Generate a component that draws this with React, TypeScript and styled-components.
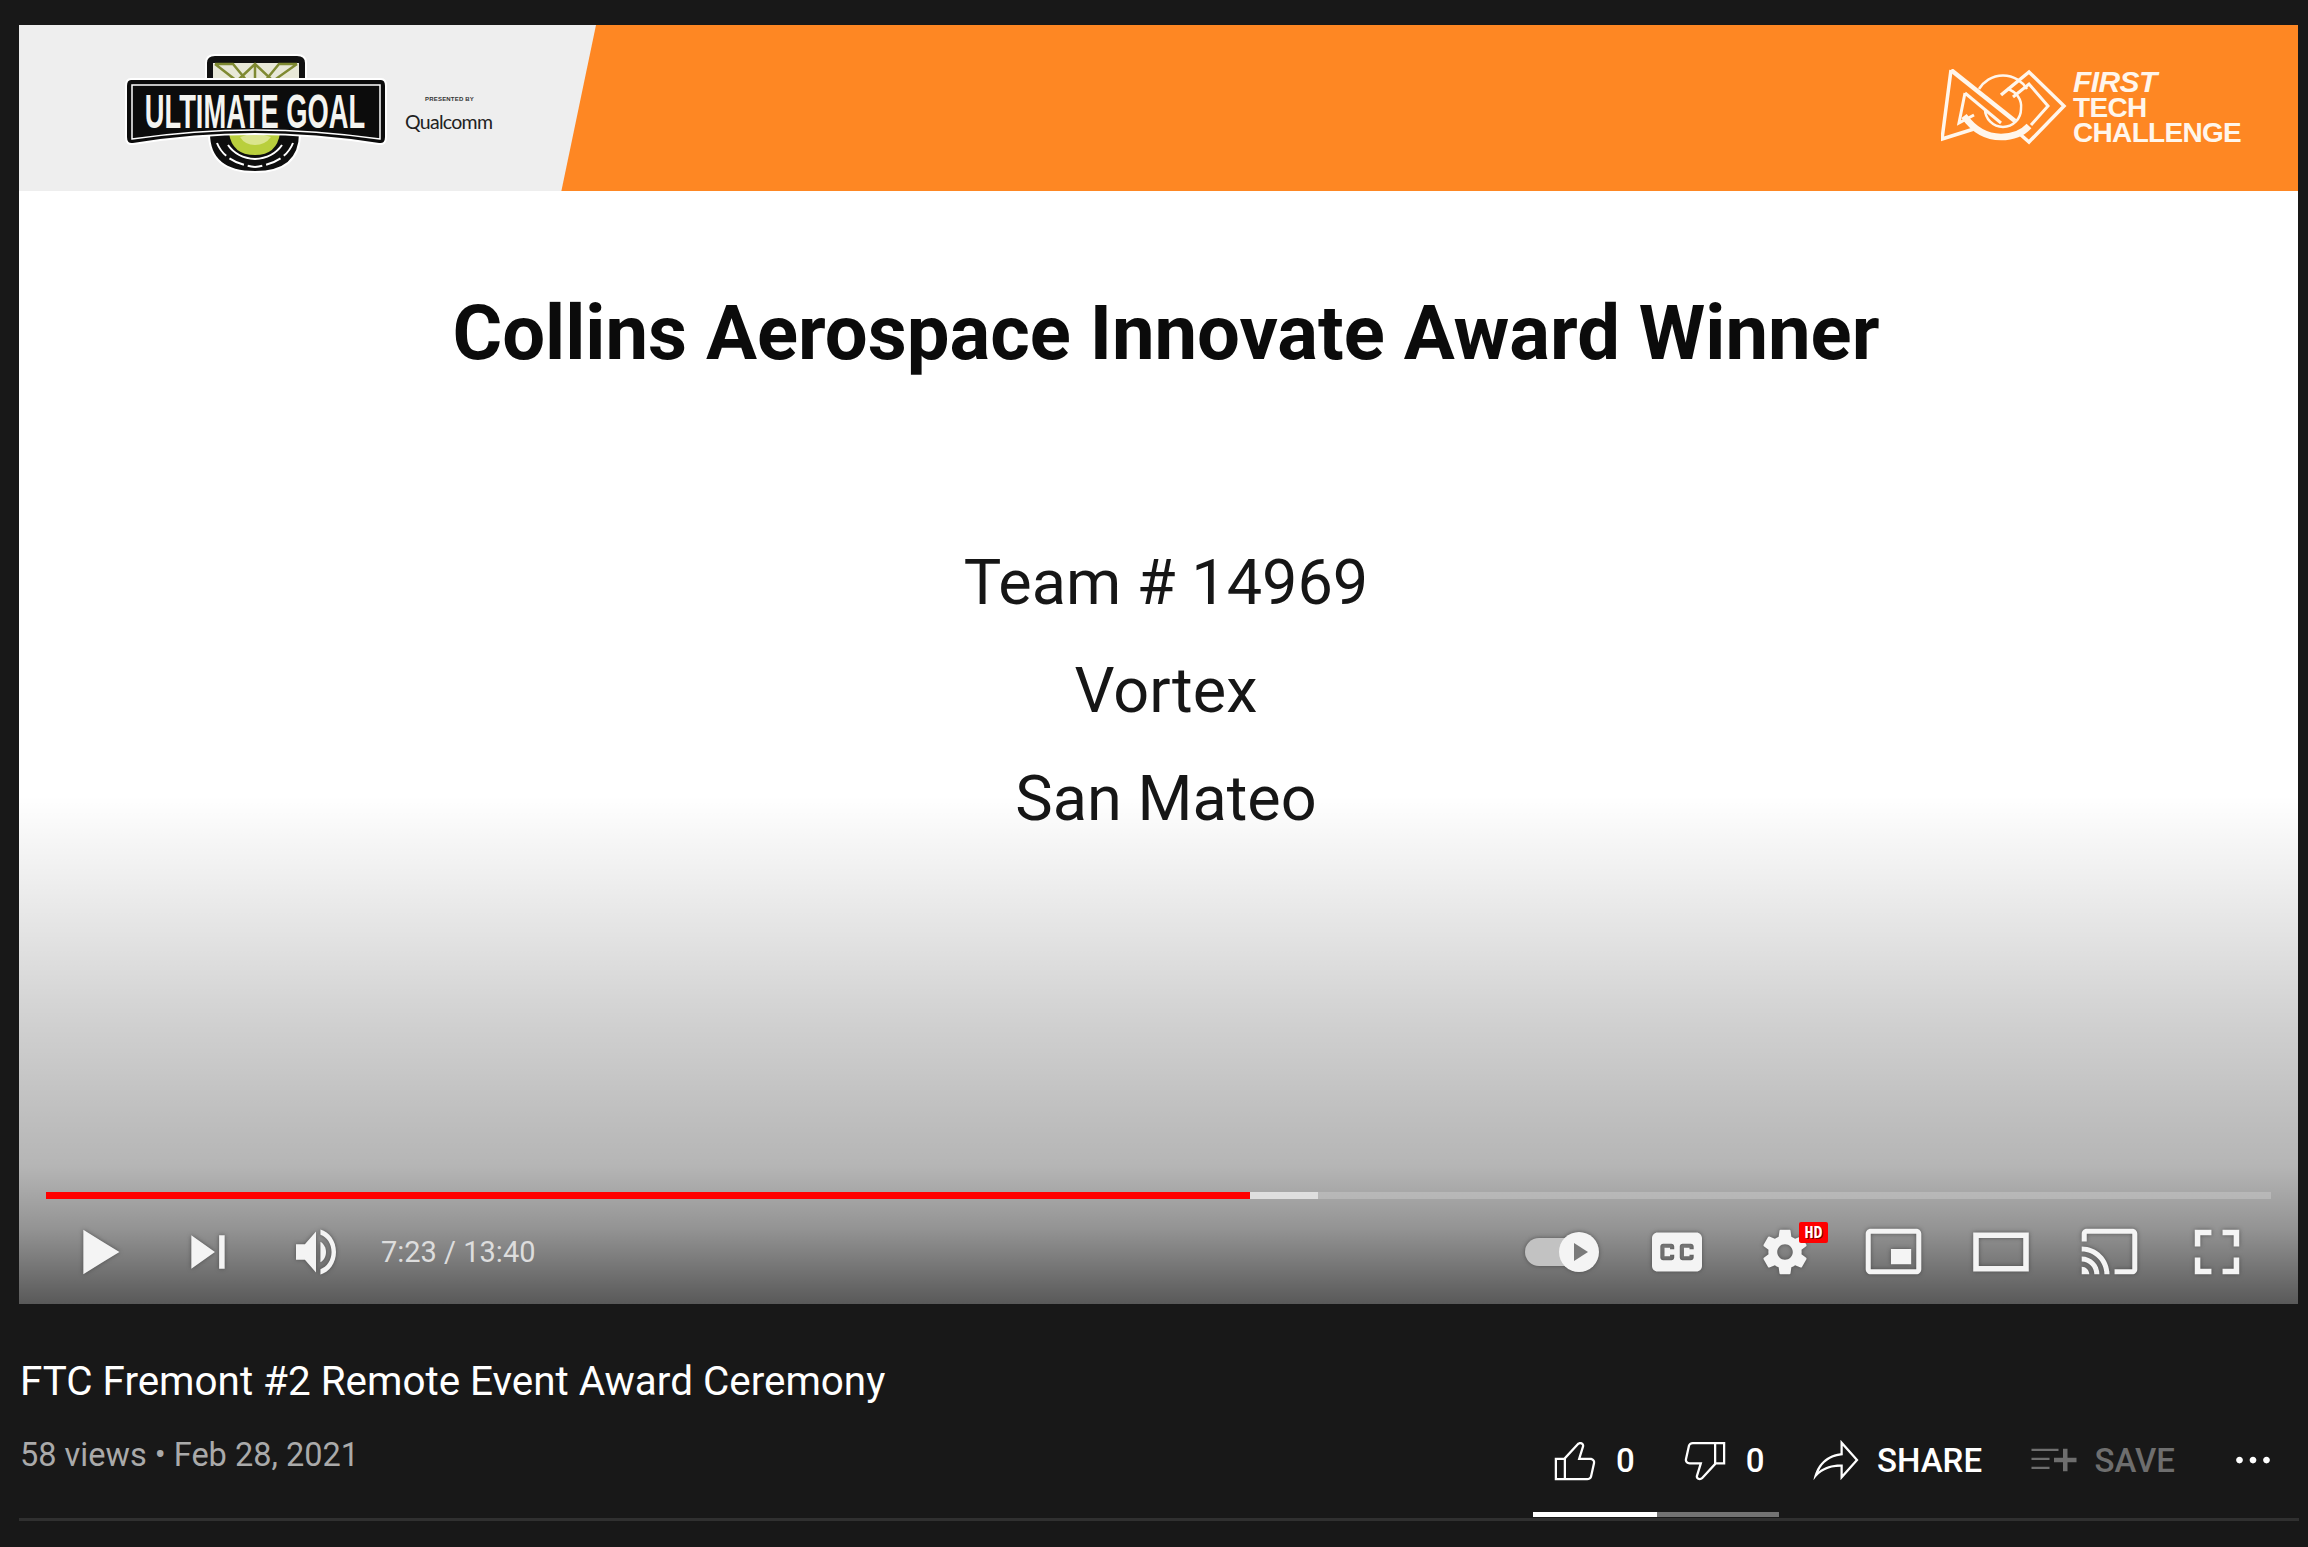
import styled, { createGlobalStyle } from "styled-components";

const GlobalStyle = createGlobalStyle`
  html, body {
    margin: 0;
    padding: 0;
    background: #181818;
  }
  body {
    font-family: Roboto, "Liberation Sans", sans-serif;
  }
`;

const Page = styled.div`
  width: 2308px;
  height: 1547px;
  overflow: hidden;
  padding: 25px 10px 0 19px;
  box-sizing: border-box;
  background: #181818;
`;

const Player = styled.div`
  position: relative;
  width: 2279px;
  height: 1279px;
  background: #fff;
  overflow: hidden;
`;

const Banner = styled.div`
  display: flex;
  justify-content: space-between;
  height: 166px;
  background: #fe8723;
`;

const BannerLeft = styled.div`
  display: flex;
  align-items: center;
  width: 577px;
  padding-left: 106px;
  box-sizing: border-box;
  background: #eeeeee;
  clip-path: polygon(0 0, 100% 0, 94% 100%, 0 100%);
`;

const LogoSlot = styled.div`
  flex: none;
  margin-top: 12px;
  line-height: 0;
`;

const SponsorBlock = styled.div`
  display: flex;
  flex-direction: column;
  align-items: flex-start;
  margin-left: 18px;
  margin-top: 12px;
`;

const PresentedBy = styled.span`
  font-family: "Liberation Sans", sans-serif;
  font-size: 6px;
  font-weight: 700;
  color: #333;
  margin-left: 20px;
  letter-spacing: 0.2px;
`;

const Sponsor = styled.span`
  font-family: Lato, sans-serif;
  font-size: 19.5px;
  color: #222;
  letter-spacing: -0.7px;
  margin-top: 8px;
`;

const BannerRight = styled.div`
  display: flex;
  align-items: flex-start;
  padding: 44px 57px 0 0;
  gap: 6px;
`;

const FirstText = styled.div`
  display: flex;
  flex-direction: column;
  font-family: "Liberation Sans", sans-serif;
  font-weight: 700;
  font-size: 28px;
  line-height: 25px;
  color: #fff6ec;
  letter-spacing: -0.7px;
`;

const FirstWord = styled.span`
  font-style: italic;
  font-weight: 700;
  font-size: 30px;
  letter-spacing: -0.6px;
  margin-bottom: 1px;
`;

const Slide = styled.div`
  display: flex;
  flex-direction: column;
  align-items: center;
  padding: 92px 0 0 15px;
  color: #111;
`;

const SlideTitle = styled.h1`
  margin: 0 0 146px;
  font-size: 76px;
  line-height: 100px;
  font-weight: 700;
  color: #0b0b0b;
`;

const SlideLine = styled.div`
  font-size: 63px;
  line-height: 108px;
  color: #161616;
`;

const Shade = styled.div`
  position: absolute;
  left: 0;
  right: 0;
  bottom: 0;
  height: 509px;
  background: linear-gradient(
    to bottom,
    rgba(0, 0, 0, 0) 0%,
    rgba(0, 0, 0, 0.07) 18%,
    rgba(0, 0, 0, 0.19) 46%,
    rgba(0, 0, 0, 0.29) 73%,
    rgba(0, 0, 0, 0.42) 85%,
    rgba(0, 0, 0, 0.65) 100%
  );
`;

const ControlsWrap = styled.div`
  position: absolute;
  left: 27px;
  right: 27px;
  bottom: 0;
  display: flex;
  flex-direction: column;
`;

const Track = styled.div`
  position: relative;
  height: 7px;
  background: rgba(255, 255, 255, 0.2);
`;

const TrackFill = styled.div<{ $color: string }>`
  position: absolute;
  left: 0;
  top: 0;
  bottom: 0;
  background: ${({ $color }) => $color};
`;

const ControlBar = styled.div`
  display: flex;
  justify-content: space-between;
  align-items: center;
  height: 105px;
`;

const ControlGroup = styled.div`
  display: flex;
  align-items: center;
`;

const ControlButton = styled.div`
  position: relative;
  display: flex;
  align-items: center;
  justify-content: center;
  width: 108px;
  height: 105px;
  color: #f4f4f4;
`;

const ControlIcon = styled.svg<{ $small?: boolean }>`
  display: block;
  width: ${({ $small }) => ($small ? 91 : 100)}px;
  height: ${({ $small }) => ($small ? 91 : 100)}px;
  fill: currentColor;
  flex: none;
  filter: drop-shadow(0 0 2px rgba(60, 60, 60, 0.7));
`;

const VolumeIcon = styled(ControlIcon)`
  width: 40px;
  height: 46px;
`;

const TimeText = styled.span`
  margin-left: 11px;
  font-size: 29px;
  color: #dddddd;
`;

const ToggleIcon = styled.svg`
  display: block;
  width: 78px;
  height: 44px;
  margin-right: 14px;
  filter: drop-shadow(0 0 2px rgba(60, 60, 60, 0.7));
`;

const HdBadge = styled.span`
  position: absolute;
  top: 23px;
  left: 68px;
  width: 29px;
  height: 21px;
  display: flex;
  align-items: center;
  justify-content: center;
  background: #f00;
  border-radius: 2px;
  font-family: "DejaVu Sans Mono", monospace;
  font-size: 15px;
  font-weight: 700;
  color: #fff;
  text-shadow: 1px 1px 0 #7a0000;
`;

const Info = styled.div`
  padding: 0 0 0 1px;
  width: 2279px;
`;

const VideoTitle = styled.h2`
  margin: 53px 0 0;
  font-size: 40.4px;
  line-height: 50px;
  font-weight: 400;
  color: #fff;
`;

const MetaRow = styled.div`
  display: flex;
  justify-content: space-between;
  align-items: center;
  height: 116px;
  margin-top: -5px;
`;

const Meta = styled.span`
  font-size: 32.5px;
  color: #aaaaaa;
  margin-top: -10px;
`;

const Actions = styled.div`
  position: relative;
  display: flex;
  align-items: center;
  padding-right: 19px;
`;

const Action = styled.div<{ $dim?: boolean; $space: number }>`
  display: flex;
  align-items: center;
  gap: 14px;
  margin-left: ${({ $space }) => $space}px;
  font-size: 33px;
  font-weight: 500;
  color: ${({ $dim }) => ($dim ? "#6e6e6e" : "#fff")};
`;

const ActionIcon = styled.svg`
  display: block;
  width: 54px;
  height: 54px;
  fill: currentColor;
`;

const Sentiment = styled.div`
  position: absolute;
  left: 31px;
  top: 79px;
  width: 246px;
  height: 5px;
  background: #737373;
`;

const SentimentFill = styled.div`
  width: 124px;
  height: 100%;
  background: #fff;
`;

const Divider = styled.div`
  height: 3px;
  background: #303030;
  margin-left: -1px;
`;

function UltimateGoalLogo() {
  return (
    <svg width="262" height="122" viewBox="0 0 262 122">
      {/* truss on top */}
      <path d="M81 30 V10 Q81 2 90 2 H172 Q181 2 181 10 V30 Z" fill="#111" stroke="#fff" strokeWidth="2" />
      <rect x="88" y="10" width="86" height="20" fill="#e8e8d8" />
      <path
        d="M90 11 L112 28 L130 11 L148 28 L172 11 M90 11 L108 11 L122 28 M172 11 L154 11 L140 28 M130 11 V28"
        fill="none"
        stroke="#7f8a32"
        strokeWidth="2.5"
      />
      {/* round bottom */}
      <path d="M84 80 H175 Q175 119 130 119 Q84 119 84 80 Z" fill="#0e0e0e" stroke="#fff" strokeWidth="2" />
      <path d="M104 80 H155 Q152 102 130 102 Q107 102 104 80 Z" fill="#b9cf3d" />
      <path d="M115 84 Q130 78 146 84 Q140 92 130 92 Q120 92 115 84 Z" fill="#dbe58e" />
      <path d="M92 90 Q100 110 130 114" fill="none" stroke="#fff" strokeWidth="2" strokeDasharray="16 4" />
      <path d="M168 90 Q160 110 130 114" fill="none" stroke="#fff" strokeWidth="2" strokeDasharray="16 4" />
      <path d="M103 92 Q112 105 130 106 Q148 105 157 92" fill="none" stroke="#fff" strokeWidth="2" />
      {/* main plate */}
      <path
        d="M6 26 Q1 26 1 33 V84 Q1 92 8 91 Q70 81 130 81 Q190 81 254 91 Q261 92 261 84 V33 Q261 26 256 26 Z"
        fill="#0c0c0c"
        stroke="#fff"
        strokeWidth="2"
      />
      <path d="M7 32 H255 V86 Q190 77 130 77 Q70 77 7 86 Z" fill="none" stroke="#fff" strokeWidth="1.5" />
      <text
        transform="translate(130 75) scale(0.569 1)"
        fontFamily="'Liberation Sans', sans-serif"
        fontSize="48"
        fontWeight="700"
        fill="#f4f4f0"
        textAnchor="middle"
      >
        ULTIMATE GOAL
      </text>
    </svg>
  );
}

function FirstLogo() {
  return (
    <svg width="126" height="76" viewBox="0 0 126 76" fill="none" stroke="#fff6ec" strokeWidth="3.5">
      {/* thin ring behind the bands */}
      <path d="M38 20 A28 28 0 0 1 86 20" strokeWidth="2.5" />
      <path d="M44 40 A18 18 0 0 0 80 40 A18 18 0 0 0 66 20" strokeWidth="2.5" />
      {/* left triangle */}
      <path d="M10 1 L1 70 L36 59" />
      <path d="M10 1 L74 52" strokeWidth="4.5" />
      <path d="M24 24 L18 54 L33 46" strokeWidth="3" />
      <path d="M24 24 L60 54" strokeWidth="3" />
      {/* right diamond */}
      <path d="M60 26 L88 3 L123 37 L88 73 L80 66" />
      <path d="M72 28 L88 15 L107 37 L90 56" strokeWidth="3" />
      {/* heavy lower arc */}
      <path d="M23 47 Q38 68 60 68 Q78 68 88 57" strokeWidth="6.5" />
    </svg>
  );
}

function Toggle() {
  return (
    <ToggleIcon viewBox="0 0 78 44">
      <rect x="2" y="8" width="60" height="28" rx="14" fill="#c2c2c2" />
      <ellipse cx="56" cy="22" rx="20" ry="20" fill="#f4f4f4" />
      <path d="M51 13 L65 22 L51 31 Z" fill="#7a7a7a" />
    </ToggleIcon>
  );
}

const ICONS = {
  play: "M12 26 18.5 22 18.5 14 12 10z M18.5 22 25 18 25 18 18.5 14z",
  next: "M12 24 20.5 18 12 12V24z M22 12v12h2V12h-2z",
  cc: "M11 11C9.89 11 9 11.9 9 13L9 23C9 24.1 9.89 25 11 25L25 25C26.1 25 27 24.1 27 23L27 13C27 11.9 26.1 11 25 11L11 11ZM17 17L15.5 17L15.5 16.5L13.5 16.5L13.5 19.5L15.5 19.5L15.5 19L17 19L17 20C17 20.55 16.55 21 16 21L13 21C12.45 21 12 20.55 12 20L12 16C12 15.45 12.45 15 13 15L16 15C16.55 15 17 15.45 17 16L17 17ZM24 17L22.5 17L22.5 16.5L20.5 16.5L20.5 19.5L22.5 19.5L22.5 19L24 19L24 20C24 20.55 23.55 21 23 21L20 21C19.45 21 19 20.55 19 20L19 16C19 15.45 19.45 15 20 15L23 15C23.55 15 24 15.45 24 16L24 17Z",
  gear: "m23.94 18.78c.03-.25.05-.51.05-.78 0-.27-.02-.52-.05-.78l1.68-1.32c.15-.12.19-.33.09-.51l-1.6-2.76c-.09-.17-.31-.24-.48-.17l-1.99.8c-.41-.32-.86-.58-1.35-.78l-.3-2.12c-.02-.19-.19-.33-.39-.33l-3.2 0c-.2 0-.36.14-.39.33l-.3 2.12c-.48.2-.93.47-1.35.78l-1.99-.8c-.18-.07-.39 0-.48.17l-1.6 2.76c-.1.17-.05.39.09.51l1.68 1.32c-.03.25-.05.52-.05.78 0 .26.02.52.05.78l-1.68 1.32c-.15.12-.19.33-.09.51l1.6 2.76c.09.17.31.24.48.17l1.99-.8c.41.32.86.58 1.35.78l.3 2.12c.02.19.19.33.39.33l3.2 0c.2 0 .36-.14.39-.33l.3-2.12c.48-.2.93-.47 1.35-.78l1.99.8c.18.07.39 0 .48-.17l1.6-2.76c.09-.17.05-.39-.09-.51l-1.68-1.32zm-5.94 2.01c-1.54 0-2.8-1.25-2.8-2.8 0-1.54 1.25-2.8 2.8-2.8 1.54 0 2.8 1.25 2.8 2.8 0 1.54-1.25 2.8-2.8 2.8z",
  mini: "M25 17L17 17L17 23L25 23L25 17ZM29 25L29 10.98C29 9.88 28.1 9 27 9L9 9C7.9 9 7 9.88 7 10.98L7 25C7 26.1 7.9 27 9 27L27 27C28.1 27 29 26.1 29 25ZM27 25.02L9 25.02L9 10.97L27 10.97L27 25.02Z",
  theater: "m28 11 0 14-20 0 0-14zm-18 2 16 0 0 10-16 0 0-10z",
  cast: "M27 9L9 9C7.9 9 7 9.9 7 11L7 14L9 14L9 11L27 11L27 25L20 25L20 27L27 27C28.1 27 29 26.1 29 25L29 11C29 9.9 28.1 9 27 9ZM7 24L7 27L10 27C10 25.34 8.66 24 7 24ZM7 20L7 22C9.76 22 12 24.24 12 27L14 27C14 23.13 10.87 20 7 20ZM7 16L7 18C11.97 18 16 22.03 16 27L18 27C18 20.92 13.07 16 7 16Z",
  full: "m10 16 2 0 0-4 4 0 0-2L10 10l0 6zm10-6 0 2 4 0 0 4 2 0L26 10l-6 0zm4 14-4 0 0 2L26 26l0-6-2 0 0 4zM12 20 10 20 10 26l6 0 0-2-4 0 0-4z",
};

const ACTION_ICONS = {
  like: "M18.77 11h-4.23l1.52-4.94C16.38 5.03 15.54 4 14.38 4c-.58 0-1.14.24-1.52.65L7 11H3v10h4h1h9.43c1.06 0 1.98-.67 2.19-1.61l1.34-6C21.23 12.15 20.18 11 18.77 11zM7 20H4v-8h3V20zM19.98 13.17l-1.34 6C18.54 19.65 18.03 20 17.43 20H8v-8.61l5.6-6.06C13.79 5.12 14.08 5 14.38 5c.26 0 .5.11.63.3c.07.1.15.26.09.47l-1.52 4.94L13.18 12h1.35h4.23c.41 0 .8.17 1.03.46C19.92 12.61 20.05 12.86 19.98 13.17z",
  dislike: "M17 4h-1H6.57C5.5 4 4.59 4.67 4.38 5.61l-1.34 6C2.77 12.85 3.82 14 5.23 14h4.23l-1.52 4.94C7.62 19.97 8.46 21 9.62 21c.58 0 1.14-.24 1.52-.65L17 14h4V4H17zM10.4 19.67C10.21 19.88 9.92 20 9.62 20c-.26 0-.5-.11-.63-.3c-.07-.1-.15-.26-.09-.47l1.52-4.94l.4-1.29H9.46H5.23c-.41 0-.8-.17-1.03-.46c-.12-.15-.25-.4-.18-.72l1.34-6C5.46 5.35 5.97 5 6.57 5H16v8.61L10.4 19.67zM20 13h-3V5h3V13z",
  share: "M15 5.63L20.66 12L15 18.37V15v-1h-1c-3.96 0-7.14 1-9.75 3.09c1.84-4.07 5.11-6.4 9.89-7.1L15 9.86V9V5.63M14 3v6C6.22 10.13 3.11 15.33 2 21c2.78-3.97 6.44-6 12-6v6l8-9L14 3L14 3z",
  save: "M22 13h-4v4h-2v-4h-4v-2h4V7h2v4h4V13zM14 7H2v1h12V7zM2 12h8v-1H2V12zM2 16h8v-1H2V16z",
  more: "M7.5 12c0 .83-.67 1.5-1.5 1.5S4.5 12.83 4.5 12s.67-1.5 1.5-1.5S7.5 11.17 7.5 12zM12 10.5c-.83 0-1.5.67-1.5 1.5s.67 1.5 1.5 1.5s1.5-.67 1.5-1.5S12.83 10.5 12 10.5zM18 10.5c-.83 0-1.5.67-1.5 1.5s.67 1.5 1.5 1.5s1.5-.67 1.5-1.5S18.83 10.5 18 10.5z",
};

const PLAYED = 54.1;
const BUFFERED = 57.15;

export default function App() {
  const rightIcons: (keyof typeof ICONS)[] = ["cc", "gear", "mini", "theater", "cast", "full"];

  return (
    <>
      <GlobalStyle />
      <Page>
        <Player>
          <Banner>
            <BannerLeft>
              <LogoSlot>
                <UltimateGoalLogo />
              </LogoSlot>
              <SponsorBlock>
                <PresentedBy>PRESENTED BY</PresentedBy>
                <Sponsor>Qualcomm</Sponsor>
              </SponsorBlock>
            </BannerLeft>
            <BannerRight>
              <FirstLogo />
              <FirstText>
                <FirstWord>FIRST</FirstWord>
                <span>TECH</span>
                <span>CHALLENGE</span>
              </FirstText>
            </BannerRight>
          </Banner>
          <Slide>
            <SlideTitle>Collins Aerospace Innovate Award Winner</SlideTitle>
            <SlideLine>Team # 14969</SlideLine>
            <SlideLine>Vortex</SlideLine>
            <SlideLine>San Mateo</SlideLine>
          </Slide>
          <Shade />
          <ControlsWrap>
            <Track>
              <TrackFill $color="rgba(255,255,255,0.55)" style={{ width: `${BUFFERED}%` }} />
              <TrackFill $color="#ff0000" style={{ width: `${PLAYED}%` }} />
            </Track>
            <ControlBar>
              <ControlGroup>
                <ControlButton>
                  <ControlIcon viewBox="0 0 36 36">
                    <path d={ICONS.play} />
                  </ControlIcon>
                </ControlButton>
                <ControlButton>
                  <ControlIcon viewBox="0 0 36 36">
                    <path d={ICONS.next} />
                  </ControlIcon>
                </ControlButton>
                <ControlButton>
                  <VolumeIcon viewBox="8 9 18 18" preserveAspectRatio="none">
                    <path d="M8 21L12 21L17 26L17 10L12 15L8 15Z" />
                    <path d="M19 14L19 22C20.48 21.32 21.5 19.77 21.5 18C21.5 16.26 20.48 14.74 19 14Z" />
                    <path d="M19 11.29C21.89 12.15 24 14.83 24 18C24 21.17 21.89 23.85 19 24.71L19 26.77C23.01 25.86 26 22.28 26 18C26 13.72 23.01 10.14 19 9.23Z" />
                  </VolumeIcon>
                </ControlButton>
                <TimeText>7:23 / 13:40</TimeText>
              </ControlGroup>
              <ControlGroup>
                <ControlButton>
                  <Toggle />
                </ControlButton>
                {rightIcons.map((name) => (
                  <ControlButton key={name}>
                    <ControlIcon viewBox="0 0 36 36" $small={name === "mini" || name === "cast"}>
                      <path d={ICONS[name]} fillRule="evenodd" />
                    </ControlIcon>
                    {name === "gear" && <HdBadge>HD</HdBadge>}
                  </ControlButton>
                ))}
              </ControlGroup>
            </ControlBar>
          </ControlsWrap>
        </Player>
        <Info>
          <VideoTitle>FTC Fremont #2 Remote Event Award Ceremony</VideoTitle>
          <MetaRow>
            <Meta>58 views • Feb 28, 2021</Meta>
            <Actions>
              <Action $space={46}>
                <ActionIcon viewBox="0 0 24 24">
                  <path d={ACTION_ICONS.like} />
                </ActionIcon>
                0
              </Action>
              <Action $space={43}>
                <ActionIcon viewBox="0 0 24 24">
                  <path d={ACTION_ICONS.dislike} />
                </ActionIcon>
                0
              </Action>
              <Action $space={44.5}>
                <ActionIcon viewBox="0 0 24 24">
                  <path d={ACTION_ICONS.share} />
                </ActionIcon>
                SHARE
              </Action>
              <Action $dim $space={44.5}>
                <ActionIcon viewBox="0 0 24 24">
                  <path d={ACTION_ICONS.save} />
                </ActionIcon>
                SAVE
              </Action>
              <Action $space={51}>
                <ActionIcon viewBox="0 0 24 24">
                  <path d={ACTION_ICONS.more} />
                </ActionIcon>
              </Action>
              <Sentiment>
                <SentimentFill />
              </Sentiment>
            </Actions>
          </MetaRow>
          <Divider />
        </Info>
      </Page>
    </>
  );
}
